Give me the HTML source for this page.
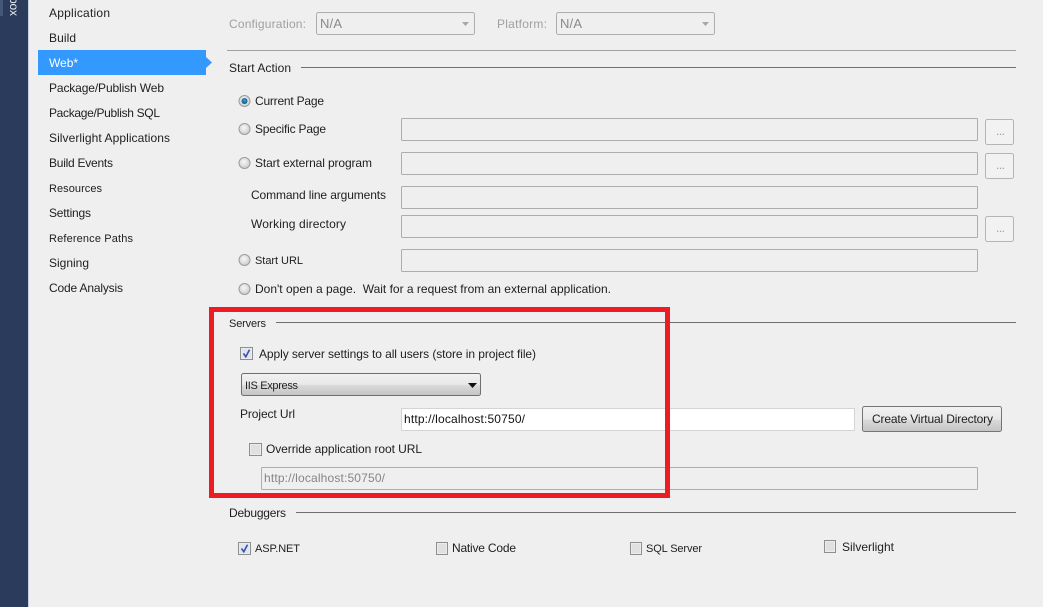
<!DOCTYPE html>
<html><head><meta charset="utf-8"><title>Web</title>
<style>
html,body{margin:0;padding:0;width:1043px;height:607px;overflow:hidden;background:#efefef}
svg{display:block}
text{font-family:"Liberation Sans",sans-serif;font-size:12px;fill:#1e1e1e;white-space:pre}
.g{fill:#a0a0a0}
.s{font-size:11px}
.i{fill:#efefef;stroke:#adadad;stroke-width:1}
.b{fill:#f2f2f2;stroke:#b4b4b4;stroke-width:1}
.l{stroke:#6e6e6e;stroke-width:1}
.c{fill:#ececec;stroke:#8e8e8e;stroke-width:1}
</style></head><body>
<svg width="1043" height="607" viewBox="0 0 1043 607" xmlns="http://www.w3.org/2000/svg">
<defs>
<linearGradient id="sel" x1="0" y1="0" x2="0" y2="1"><stop offset="0" stop-color="#f2f2f2"/><stop offset=".5" stop-color="#e8e8e8"/><stop offset=".55" stop-color="#d9d9d9"/><stop offset="1" stop-color="#c4c4c4"/></linearGradient>
<radialGradient id="rad" cx=".45" cy=".4" r=".7"><stop offset="0" stop-color="#f8f8f8"/><stop offset="1" stop-color="#c4c4c4"/></radialGradient>
<radialGradient id="dot" cx=".5" cy=".4" r=".6"><stop offset="0" stop-color="#35a5d8"/><stop offset="1" stop-color="#0d4f78"/></radialGradient>
</defs>
<rect width="1043" height="607" fill="#efefef"/>
<rect x="0" y="0" width="28" height="607" fill="#2b3b5b"/>
<rect x="28" y="0" width="1" height="607" fill="#c5d0e0"/>
<rect x="0" y="0" width="3" height="16" fill="#46557a"/>
<text transform="translate(10,0) rotate(90)" x="-3" y="0" style="fill:#e6e9f0" textLength="19" lengthAdjust="spacing">box</text>

<path d="M38 50H206V57L212 62.500L206 68V75H38Z" fill="#3399ff"/>
<text x="49" y="17" textLength="61">Application</text>
<text x="49" y="42" textLength="27">Build</text>
<text x="49" y="67" textLength="29" style="fill:#fff">Web*</text>
<text x="49" y="92" textLength="115">Package/Publish Web</text>
<text x="49" y="117" textLength="111">Package/Publish SQL</text>
<text x="49" y="142" textLength="121">Silverlight Applications</text>
<text x="49" y="167" textLength="64">Build Events</text>
<text x="49" y="192" textLength="53" class="s">Resources</text>
<text x="49" y="217" textLength="42">Settings</text>
<text x="49" y="242" textLength="84" class="s">Reference Paths</text>
<text x="49" y="267" textLength="40">Signing</text>
<text x="49" y="292" textLength="74">Code Analysis</text>

<text x="229" y="28" textLength="77" class="g">Configuration:</text>
<rect x="316.500" y="12.500" width="158" height="22" rx="2" class="i"/>
<text x="320" y="28" textLength="22" class="s" style="fill:#8a8a8a;font-size:13px">N/A</text>
<path d="M462 22h7l-3.500 4z" fill="#a6a6a6"/>
<text x="497" y="28" textLength="50" class="g">Platform:</text>
<rect x="556.500" y="12.500" width="158" height="22" rx="2" class="i"/>
<text x="560" y="28" textLength="22" style="fill:#8a8a8a;font-size:13px">N/A</text>
<path d="M702 22h7l-3.500 4z" fill="#a6a6a6"/>
<line x1="227" y1="50.500" x2="1016" y2="50.500" stroke="#a0a0a0"/>

<text x="229" y="72" textLength="62">Start Action</text>
<line x1="301" y1="67.500" x2="1016" y2="67.500" class="l"/>

<g stroke="#9c9c9c" fill="url(#rad)">
<circle cx="244.500" cy="101" r="5.500"/>
<circle cx="244.500" cy="129" r="5.500"/>
<circle cx="244.500" cy="163" r="5.500"/>
<circle cx="244.500" cy="260" r="5.500"/>
<circle cx="244.500" cy="289" r="5.500"/>
</g>
<circle cx="244.500" cy="101" r="3" fill="url(#dot)"/>
<text x="255" y="105" textLength="69">Current Page</text>
<text x="255" y="133" textLength="71">Specific Page</text>
<text x="255" y="167" textLength="117">Start external program</text>
<text x="251" y="199" textLength="135">Command line arguments</text>
<text x="251" y="228" textLength="95">Working directory</text>
<text x="255" y="264" textLength="48" class="s">Start URL</text>
<text x="255" y="293" textLength="356">Don't open a page.  Wait for a request from an external application.</text>

<rect x="401.500" y="118.500" width="576" height="22" rx="1" class="i"/>
<rect x="401.500" y="152.500" width="576" height="22" rx="1" class="i"/>
<rect x="401.500" y="186.500" width="576" height="22" rx="1" class="i"/>
<rect x="401.500" y="215.500" width="576" height="22" rx="1" class="i"/>
<rect x="401.500" y="249.500" width="576" height="22" rx="1" class="i"/>

<rect x="985.500" y="119.500" width="28" height="25" rx="2" class="b"/>
<rect x="985.500" y="153.500" width="28" height="25" rx="2" class="b"/>
<rect x="985.500" y="216.500" width="28" height="25" rx="2" class="b"/>
<text x="996" y="135" textLength="9" class="g">...</text>
<text x="996" y="169" textLength="9" class="g">...</text>
<text x="996" y="232" textLength="9" class="g">...</text>

<text x="229" y="327" textLength="37" class="s">Servers</text>
<line x1="276" y1="322.500" x2="1016" y2="322.500" class="l"/>

<rect x="240.500" y="347.500" width="12" height="12" class="c"/>
<rect x="242" y="349" width="9" height="9" fill="#dfe4ef"/>
<path d="M243.500 353.500l2.300 3.200 3.700-7" fill="none" stroke="#3a4fa8" stroke-width="1.600"/>
<text x="259" y="358" textLength="277">Apply server settings to all users (store in project file)</text>

<rect x="241.500" y="373.500" width="239" height="22" rx="2" fill="url(#sel)" stroke="#6f6f6f"/>
<text x="245" y="389" textLength="53" class="s">IIS Express</text>
<path d="M468 383h9l-4.500 5z" fill="#111"/>

<text x="240" y="418" textLength="55">Project Url</text>
<rect x="401.500" y="408.500" width="453" height="22" fill="#fff" stroke="#d4d4d4"/>
<text x="404" y="423" textLength="121" style="fill:#111">http://localhost:50750/</text>
<rect x="862.500" y="406.500" width="139" height="25" rx="2" fill="url(#sel)" stroke="#757575"/>
<text x="872" y="423" textLength="121">Create Virtual Directory</text>

<rect x="249.500" y="443.500" width="12" height="12" class="c"/>
<rect x="251" y="445" width="9" height="9" fill="#e0e0e0"/>
<text x="266" y="453" textLength="156">Override application root URL</text>
<rect x="261.500" y="467.500" width="716" height="22" rx="1" class="i"/>
<text x="264" y="482" textLength="121" style="fill:#858585">http://localhost:50750/</text>

<rect x="211.500" y="309.500" width="456" height="186" fill="none" stroke="#ed1c24" stroke-width="5"/>

<text x="229" y="517" textLength="57">Debuggers</text>
<line x1="296" y1="512.500" x2="1016" y2="512.500" class="l"/>

<rect x="238.500" y="542.500" width="12" height="12" class="c"/>
<rect x="240" y="544" width="9" height="9" fill="#dfe4ef"/>
<path d="M241.500 548.500l2.300 3.200 3.700-7" fill="none" stroke="#3a4fa8" stroke-width="1.600"/>
<text x="255" y="552" textLength="45" class="s">ASP.NET</text>

<rect x="436.500" y="542.500" width="11" height="12" class="c"/>
<rect x="438" y="544" width="8" height="9" fill="#e0e0e0"/>
<text x="452" y="552" textLength="64">Native Code</text>

<rect x="630.500" y="542.500" width="11" height="12" class="c"/>
<rect x="632" y="544" width="8" height="9" fill="#e0e0e0"/>
<text x="646" y="552" textLength="56" class="s">SQL Server</text>

<rect x="824.500" y="540.500" width="11" height="12" class="c"/>
<rect x="826" y="542" width="8" height="9" fill="#e0e0e0"/>
<text x="842" y="551" textLength="52">Silverlight</text>
</svg>
</body></html>
